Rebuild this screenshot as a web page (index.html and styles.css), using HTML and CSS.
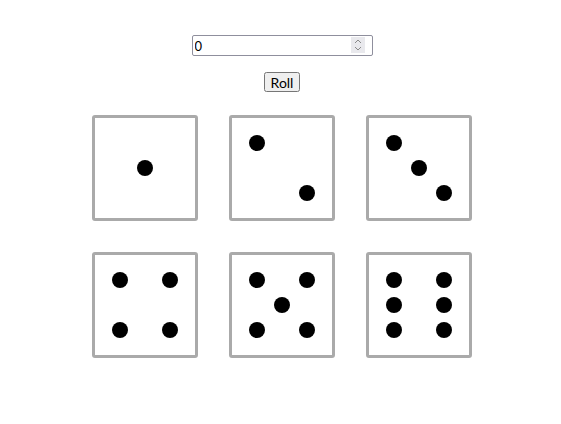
FILE: index.html
```html
<!DOCTYPE html>
<html>
<head>
<meta charset="utf-8">
<link rel="stylesheet" href="styles.css">
</head>
<body>
<div class="app">
  <div class="field">
    <input class="count" type="number" value="0">
    <span class="spin"><svg width="14" height="16" viewBox="0 0 14 16"><path d="M4 6 L7 3 L10 6" fill="none" stroke="#8a8a8a" stroke-width="1"/><path d="M4 10 L7 13 L10 10" fill="none" stroke="#8a8a8a" stroke-width="1"/></svg></span>
  </div>
  <button class="roll">Roll</button>
  <div class="dice">
    <div class="die"><span class="pip c2 r2"></span></div>
    <div class="die"><span class="pip c1 r1"></span><span class="pip c3 r3"></span></div>
    <div class="die"><span class="pip c1 r1"></span><span class="pip c2 r2"></span><span class="pip c3 r3"></span></div>
    <div class="die"><span class="pip c1 r1"></span><span class="pip c3 r1"></span><span class="pip c1 r3"></span><span class="pip c3 r3"></span></div>
    <div class="die"><span class="pip c1 r1"></span><span class="pip c3 r1"></span><span class="pip c2 r2"></span><span class="pip c1 r3"></span><span class="pip c3 r3"></span></div>
    <div class="die"><span class="pip c1 r1"></span><span class="pip c3 r1"></span><span class="pip c1 r2"></span><span class="pip c3 r2"></span><span class="pip c1 r3"></span><span class="pip c3 r3"></span></div>
  </div>
</div>
</body>
</html>
```
FILE: styles.css
```css
html, body {
  margin: 0;
  background: #fff;
}
.app {
  display: flex;
  flex-direction: column;
  align-items: center;
  padding: 35px 0 0 3px;
}
.field {
  position: relative;
  display: flex;
}
.count {
  box-sizing: border-box;
  width: 181px;
  height: 21px;
  margin: 0;
  font-family: Lato, "Open Sans", sans-serif;
  font-size: 13px;
  color: #000;
  border: 1px solid #8f8f9d;
  border-radius: 2px;
  padding: 1px 2px;
  -moz-appearance: textfield;
  appearance: textfield;
}
.count::-webkit-inner-spin-button,
.count::-webkit-outer-spin-button {
  -webkit-appearance: none;
  margin: 0;
}
.spin {
  position: absolute;
  right: 8px;
  top: 2px;
  width: 14px;
  height: 16px;
  background: #e9e9ed;
  pointer-events: none;
  display: flex;
}
.roll {
  margin-top: 16px;
  height: 20px;
  font-family: Lato, "Open Sans", sans-serif;
  font-size: 14px;
  color: #000;
  padding: 0 5px;
}
.dice {
  margin-top: 23px;
  display: grid;
  grid-template-columns: repeat(3, 106px);
  grid-auto-rows: 106px;
  gap: 31px;
}
.die {
  box-sizing: border-box;
  border: 3px solid #aaa;
  border-radius: 3px;
  display: grid;
  grid-template-columns: repeat(3, 25px);
  grid-template-rows: repeat(3, 25px);
  place-content: center;
  place-items: center;
}
.pip {
  width: 16px;
  height: 16px;
  border-radius: 50%;
  background: #000;
}
.c1 { grid-column: 1; }
.c2 { grid-column: 2; }
.c3 { grid-column: 3; }
.r1 { grid-row: 1; }
.r2 { grid-row: 2; }
.r3 { grid-row: 3; }
```
